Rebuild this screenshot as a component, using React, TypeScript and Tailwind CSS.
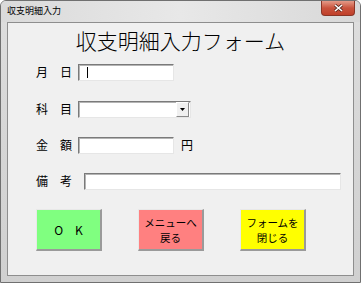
import type { ReactNode } from 'react';

const font = { fontFamily: '"Noto Sans CJK JP", "Noto Sans", sans-serif' };

// 凹んだ入力欄
function Field({ width, children }: { width: string; children?: ReactNode }) {
    return (
        <div
            className={`${width} h-[17px] bg-white flex items-center border border-t-[#7a7a7a] border-l-[#7a7a7a] border-r-[#e6e6e6] border-b-[#e6e6e6] shadow-[inset_1px_1px_0_#b4b4b4]`}
        >
            {children}
        </div>
    );
}

function Label({ children, width }: { children: ReactNode; width: string }) {
    return <div className={`${width} text-[12px] leading-[14px] text-black -mt-[2px]`}>{children}</div>;
}

function FormButton({ color, children }: { color: string; children: ReactNode }) {
    return (
        <div
            className={`${color} w-[66px] h-[42px] flex items-center justify-center text-center text-[10.5px] leading-[15px] text-black border-t border-l border-t-[#e8e8e8] border-l-[#e8e8e8] border-r-2 border-b-2 border-r-[#9a9a9a] border-b-[#9a9a9a]`}
        >
            <div>{children}</div>
        </div>
    );
}

export default function App() {
    return (
        <div
            className="w-[361px] h-[283px] flex flex-col bg-gradient-to-b from-[#dedede] via-[#d6d6d6] to-[#d0d0d0] border border-[#707070] rounded-t-[6px] overflow-hidden"
            style={font}
        >
            {/* タイトルバー */}
            <div className="relative h-[21px] flex items-center pl-[6px] bg-gradient-to-r from-[#dadada] via-[#e8e8e8] to-[#d8d8d8]">
                <span className="text-[9px] leading-[10px] text-black -mt-[1px]">収支明細入力</span>
                <div className="absolute right-[5px] top-0 w-[34px] h-[15px] rounded-b-[4px] border border-t-0 border-[#8a3526] bg-gradient-to-b from-[#e49a88] via-[#c9533d] to-[#c0402a] flex items-center justify-center">
                    <svg width="9" height="8" viewBox="0 0 9 8">
                        <path d="M1 1l7 6M8 1L1 7" stroke="#5a2a20" strokeWidth="3" />
                        <path d="M1 1l7 6M8 1L1 7" stroke="#ffffff" strokeWidth="1.6" />
                    </svg>
                </div>
            </div>

            {/* クライアント領域 */}
            <div className="flex-1 mx-[6px] mb-[6px] border border-[#8e8e8e] bg-[#f0f0f0] flex flex-col">
                <div className="pt-[5px] text-center text-[21px] leading-[24px] font-light text-black">収支明細入力フォーム</div>

                <div className="pl-[28px] mt-[12px] flex flex-col">
                    <div className="flex items-center">
                        <Label width="w-[42px]">月　日</Label>
                        <Field width="w-[96px]">
                            <span className="ml-[8px] w-px h-[11px] bg-black" />
                        </Field>
                    </div>

                    <div className="flex items-center mt-[20px]">
                        <Label width="w-[42px]">科　目</Label>
                        <Field width="w-[113px]">
                            <div className="ml-auto mr-px w-[13px] h-[15px] bg-[#f0f0f0] border border-t-[#ffffff] border-l-[#ffffff] border-r-[#8a8a8a] border-b-[#8a8a8a] flex items-center justify-center">
                                <svg width="5" height="3" viewBox="0 0 5 3">
                                    <path d="M0 0h5L2.5 3z" fill="#000" />
                                </svg>
                            </div>
                        </Field>
                    </div>

                    <div className="flex items-center mt-[19px]">
                        <Label width="w-[42px]">金　額</Label>
                        <Field width="w-[96px]" />
                        <span className="ml-[7px] text-[12px] leading-[14px] -mt-[2px]">円</span>
                    </div>

                    <div className="flex items-center mt-[19px]">
                        <Label width="w-[48px]">備　考</Label>
                        <Field width="w-[257px]" />
                    </div>

                    {/* ボタン */}
                    <div className="flex gap-[36px] mt-[19px]">
                        <FormButton color="bg-[#80ff80]">
                            <span className="text-[12px]">O　K</span>
                        </FormButton>
                        <FormButton color="bg-[#ff8080]">
                            メニューへ
                            <br />
                            戻る
                        </FormButton>
                        <FormButton color="bg-[#ffff00]">
                            フォームを
                            <br />
                            閉じる
                        </FormButton>
                    </div>
                </div>
            </div>
        </div>
    );
}
